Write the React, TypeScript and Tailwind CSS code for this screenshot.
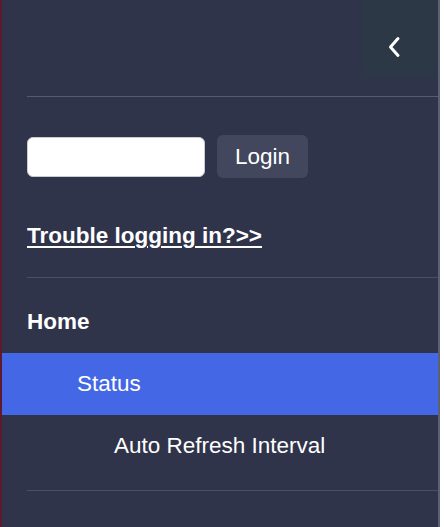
const App = () => {
  return (
    <div className="flex h-[527px] w-[444px] bg-white font-['Liberation_Sans',Arial,sans-serif]">
      <div className="flex w-[440px] flex-col border-l-2 border-r-2 border-l-[#5c1a2c] border-r-[#5b6075] bg-[#30344b] text-white">
        <div className="flex h-[78px] justify-end">
          <button className="flex w-[76px] items-start justify-start bg-[#2c3846] pl-[25px] pt-[36px]">
            <svg width="14" height="22" viewBox="0 0 14 22" fill="none">
              <polyline
                points="11,2.5 3.5,11 11,19.5"
                stroke="white"
                strokeWidth="3"
                strokeLinecap="round"
                strokeLinejoin="round"
              />
            </svg>
          </button>
        </div>
        <div className="ml-[25px] mt-[18px] h-px bg-[#565b73]" />

        <div className="ml-[25px] mt-[38px] flex items-center gap-3">
          <input
            type="text"
            className="h-[40px] w-[178px] rounded-md border border-[#c9cad2] bg-white px-2 text-black outline-none"
          />
          <button className="h-[43px] rounded-md bg-[#42475d] px-[18px] text-[22.5px] text-white">
            Login
          </button>
        </div>

        <a
          href="#"
          className="ml-[25px] mt-[45px] text-[22.5px] font-bold leading-[26px] text-white underline underline-offset-[3px]"
        >
          Trouble logging in?&gt;&gt;
        </a>

        <div className="ml-[25px] mt-[28px] h-px bg-[#4a4f66]" />

        <div className="ml-[25px] mt-[31px] text-[22.5px] font-bold leading-[26px]">Home</div>

        <div className="mt-[18px] flex h-[62px] items-center bg-[#4467e5] pl-[75px] text-[22.5px]">
          Status
        </div>
        <div className="flex h-[62px] items-center pl-[112px] text-[22.5px]">
          Auto Refresh Interval
        </div>

        <div className="ml-[25px] mt-[13px] h-px bg-[#4a4f66]" />
      </div>
    </div>
  );
};

export default App;
